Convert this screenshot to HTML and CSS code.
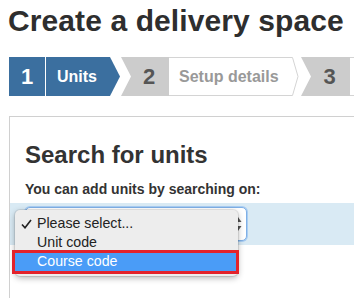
FILE: index.html
```html
<!DOCTYPE html>
<html>
<head>
  <meta charset="UTF-8">
  <title>Create a delivery space</title>
  <link rel="stylesheet" href="styles.css">
</head>
<body>
  <h1 class="page-title">Create a delivery space</h1>

  <div class="steps">
    <div class="step-num step-active">1</div>
    <div class="step-label step-active-label">Units</div>
    <div class="step-num step-grey">2</div>
    <div class="step-label step-outline">
      <span class="step-text">Setup details</span>
      <svg class="step-tip" width="10" height="39" viewBox="0 0 10 39">
        <polyline points="0,0.5 3.5,0.5 9,19.5 3.5,38.5 0,38.5" fill="#fff" stroke="#d4d4d4" stroke-width="1"/>
      </svg>
    </div>
    <div class="step-num step-grey step-three">3</div>
    <div class="step-label step-rest"></div>
  </div>

  <div class="panel">
    <h2 class="panel-title">Search for units</h2>
    <p class="panel-hint">You can add units by searching on:</p>

    <div class="search-band">
      <div class="select-box">
        <svg class="select-arrows" width="8" height="16" viewBox="0 0 8 16">
          <path d="M4 1 L7.5 6 L0.5 6 Z" fill="#555"/>
          <path d="M4 15 L7.5 10 L0.5 10 Z" fill="#555"/>
        </svg>
      </div>

      <ul class="select-menu">
        <li class="menu-item">
          <svg class="menu-check" width="11" height="10" viewBox="0 0 11 10">
            <path d="M1 5.5 L4 8.8 L10 1" fill="none" stroke="#222" stroke-width="1.6"/>
          </svg>
          Please select...
        </li>
        <li class="menu-item">Unit code</li>
        <li class="menu-item menu-item-selected">Course code</li>
      </ul>
    </div>
  </div>
</body>
</html>
```

FILE: styles.css
```css
html {
  overflow: hidden;
}
body {
  margin: 0;
  padding: 0 0 0 9px;
  font-family: "Liberation Sans", Arial, sans-serif;
  color: #333;
  background: #fff;
}
.page-title {
  margin: 3px 0 18px -1px;
  font-size: 30px;
  line-height: 36px;
  font-weight: bold;
  letter-spacing: 0.1px;
  color: #2e2e2e;
  white-space: nowrap;
}

/* wizard steps */
.steps {
  display: flex;
  height: 39px;
}
.step-num {
  display: flex;
  align-items: center;
  justify-content: center;
  flex: none;
  font-size: 22px;
  font-weight: bold;
}
.step-active {
  width: 36px;
  background: #3b6f9f;
  color: #fff;
}
.step-label {
  display: flex;
  align-items: center;
  flex: none;
  font-size: 16px;
  font-weight: bold;
}
.step-active-label {
  width: 74px;
  margin-left: 1px;
  padding-left: 11px;
  box-sizing: border-box;
  background: #3b6f9f;
  color: #fff;
  clip-path: polygon(0 0, calc(100% - 10px) 0, 100% 50%, calc(100% - 10px) 100%, 0 100%);
}
.step-grey {
  width: 48px;
  margin-left: 1px;
  padding-left: 8px;
  box-sizing: border-box;
  background: #cccccc;
  color: #555;
  clip-path: polygon(0 0, 100% 0, 100% 100%, 0 100%, 10px 50%);
}
.step-three {
  width: 49px;
  margin-left: 2px;
}
.step-outline {
  width: 130px;
  color: #999;
}
.step-text {
  display: flex;
  align-items: center;
  flex: 1;
  height: 100%;
  padding-left: 10px;
  box-sizing: border-box;
  border-top: 1px solid #d4d4d4;
  border-bottom: 1px solid #d4d4d4;
}
.step-tip {
  flex: none;
  display: block;
}
.step-rest {
  flex: 1;
  min-width: 0;
  border-top: 1px solid #d4d4d4;
  border-bottom: 1px solid #d4d4d4;
  box-sizing: border-box;
}

/* search panel */
.panel {
  margin-top: 20px;
  height: 157px;
  padding: 24px 0 0 15px;
  border-top: 1px solid #d0d0d0;
  border-left: 1px solid #d0d0d0;
}
.panel-title {
  margin: 0;
  font-size: 24px;
  line-height: 28px;
  font-weight: bold;
  color: #333;
}
.panel-hint {
  margin: 11px 0 5px;
  font-size: 14px;
  line-height: 18px;
  font-weight: bold;
  color: #333;
  white-space: nowrap;
}
.search-band {
  position: relative;
  height: 42px;
  margin-left: -15px;
  padding: 4px 0 0 15px;
  box-sizing: border-box;
  background: #d9eaf4;
}
.select-box {
  position: relative;
  width: 222px;
  height: 34px;
  box-sizing: border-box;
  border: 1px solid #7fb0e6;
  border-radius: 5px;
  box-shadow: 0 0 0 1px #a9cdf2;
  background: #fff;
}
.select-arrows {
  position: absolute;
  right: 4px;
  top: 8px;
}

/* open dropdown menu */
.select-menu {
  position: absolute;
  left: 5px;
  top: 7px;
  width: 223px;
  margin: 0;
  padding: 4px 0 5px;
  list-style: none;
  background: #ededed;
  border-radius: 5px;
  box-shadow: 0 2px 6px rgba(0, 0, 0, 0.3), 0 0 0 1px rgba(0, 0, 0, 0.08);
  font-size: 14.2px;
  color: #222;
}
.menu-item {
  position: relative;
  height: 19px;
  line-height: 19px;
  padding-left: 22px;
  white-space: nowrap;
}
.menu-check {
  position: absolute;
  left: 6px;
  top: 5px;
}
.menu-item-selected {
  background: #4a9cf7;
  color: #fff;
}
.menu-item-selected::after {
  content: "";
  position: absolute;
  top: -2px;
  left: -3px;
  right: -1px;
  bottom: -3px;
  border: 3px solid #e3222b;
}
```
